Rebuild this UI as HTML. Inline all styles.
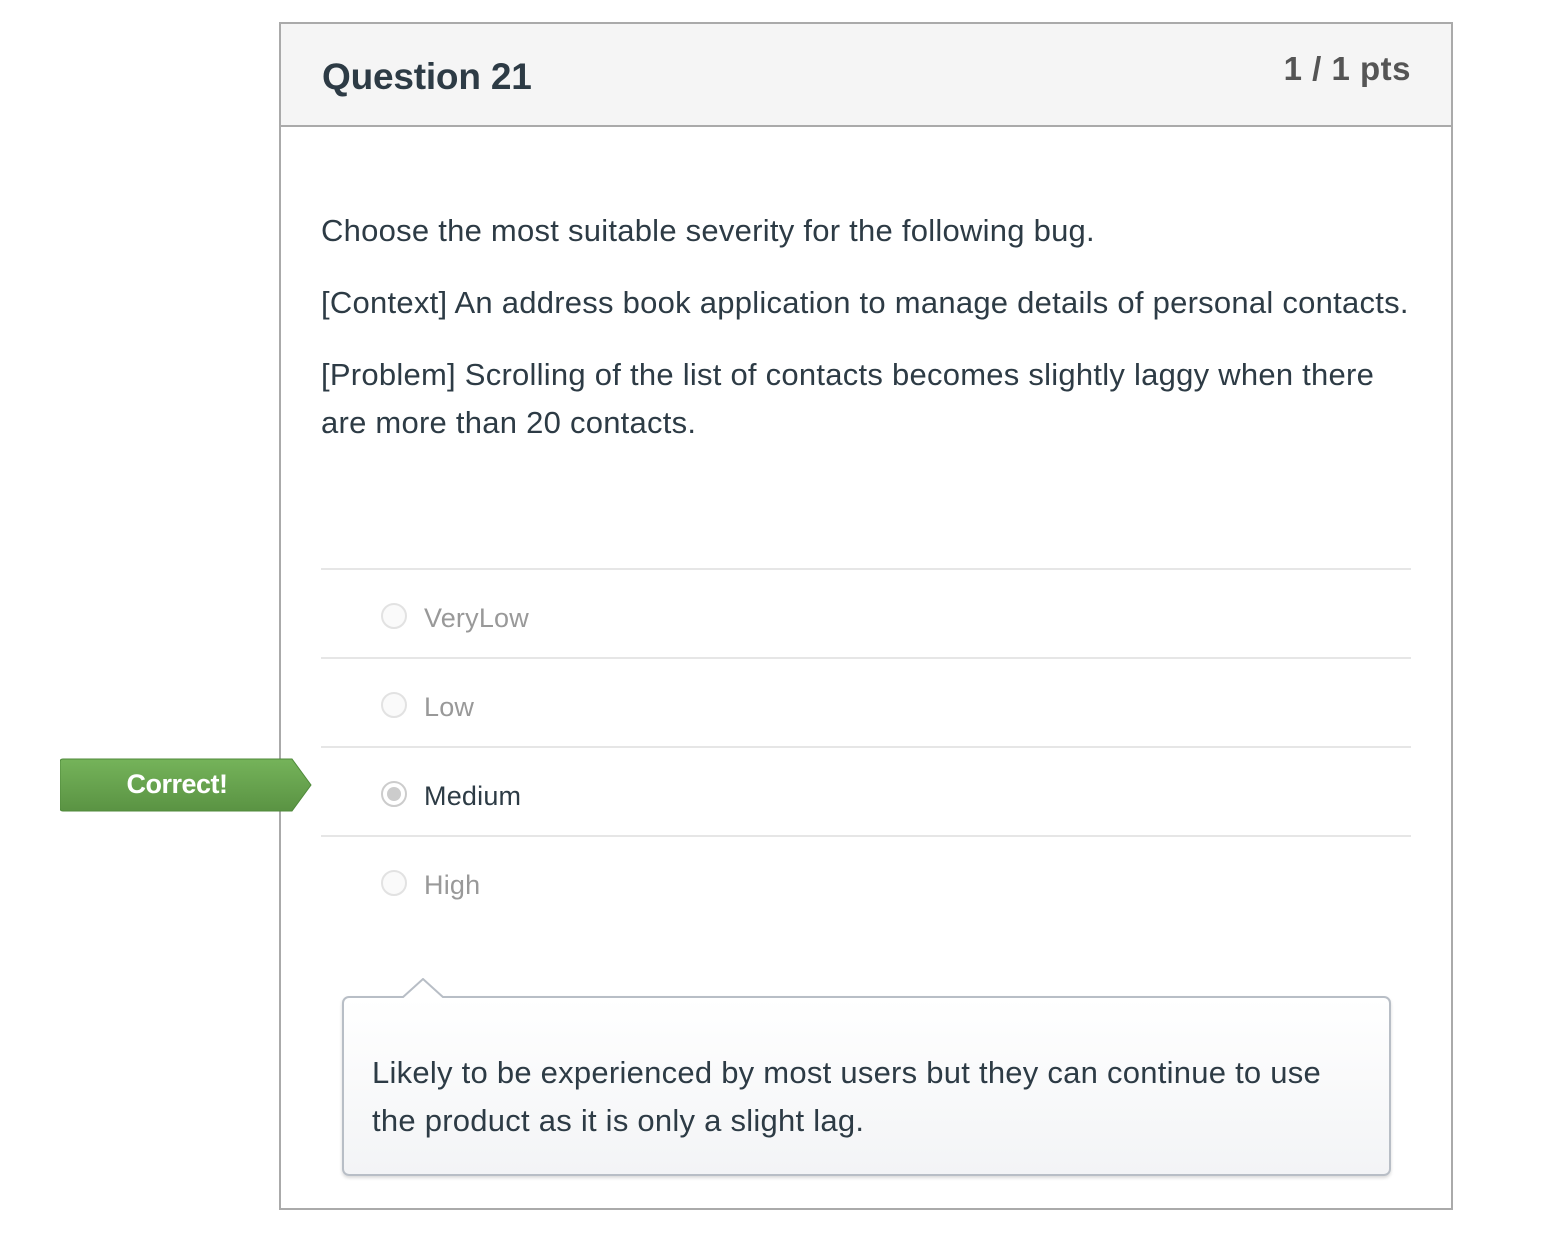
<!DOCTYPE html>
<html><head><meta charset="utf-8"><style>
*{margin:0;padding:0;box-sizing:border-box}
body{width:1557px;height:1258px;background:#fff;font-family:"Liberation Sans",sans-serif;color:#2d3b45;position:relative;overflow:hidden}
.box{position:absolute;left:279px;top:22px;width:1174px;height:1188px;border:2px solid #aaa}
.hdr{position:absolute;left:0;top:0;width:100%;height:103px;background:#f5f5f5;border-bottom:2px solid #aaa}
.q{position:absolute;left:41px;top:32px;font-size:37px;font-weight:bold;color:#2d3b45;letter-spacing:-0.2px}
.pts{position:absolute;right:40px;top:26px;font-size:33px;font-weight:bold;color:#555;letter-spacing:0.5px}
.t{position:absolute;left:321px;font-size:31px;letter-spacing:0.25px;white-space:nowrap}
.sep{position:absolute;left:321px;width:1090px;height:2px;background:#e6e6e6}
.opt{position:absolute;left:424px;font-size:27px;color:#999;letter-spacing:0.2px}
.rad{position:absolute;left:381px;width:26px;height:26px;border:2px solid #e2e2e2;border-radius:50%;background:#fafafa}
.tag{position:absolute;left:60px;top:758px;width:252px;height:54px}
.fb{position:absolute;left:342px;top:996px;width:1049px;height:180px;border:2px solid #b8bec6;border-radius:7px;background:linear-gradient(#fff,#f3f4f6);box-shadow:0 2px 3px rgba(0,0,0,.15)}
</style></head><body>
<div class="box"><div class="hdr"><div class="q">Question 21</div><div class="pts">1 / 1 pts</div></div></div>
<div class="t" style="top:213px">Choose the most suitable severity for the following bug.</div>
<div class="t" style="top:285px">[Context] An address book application to manage details of personal contacts.</div>
<div class="t" style="top:357px">[Problem] Scrolling of the list of contacts becomes slightly laggy when there</div>
<div class="t" style="top:405px">are more than 20 contacts.</div>
<div class="sep" style="top:568px"></div>
<div class="sep" style="top:657px"></div>
<div class="sep" style="top:746px"></div>
<div class="sep" style="top:835px"></div>
<div class="rad" style="top:603px"></div><div class="opt" style="top:603px">VeryLow</div>
<div class="rad" style="top:692px"></div><div class="opt" style="top:692px">Low</div>
<div class="rad" style="top:781px;border-color:#ccc;background:#fff"><div style="position:absolute;left:4px;top:4px;width:14px;height:14px;border-radius:50%;background:#ccc"></div></div>
<div class="opt" style="top:781px;color:#2d3b45">Medium</div>
<div class="rad" style="top:870px"></div><div class="opt" style="top:870px">High</div>
<svg class="tag" viewBox="0 0 252 54"><defs><linearGradient id="g" x1="0" y1="0" x2="0" y2="1"><stop offset="0" stop-color="#75b35a"/><stop offset="1" stop-color="#5a9343"/></linearGradient></defs>
<path d="M3 1H232L251 27L232 53H3Q0 53 0 50V4Q0 1 3 1Z" fill="url(#g)" stroke="#4f8a3b" stroke-width="1"/>
<text x="117" y="35" text-anchor="middle" font-family="Liberation Sans" font-size="27" font-weight="bold" fill="#fff" letter-spacing="-0.5">Correct!</text></svg>
<div class="fb"></div>
<svg style="position:absolute;left:402px;top:978px" width="44" height="22"><path d="M0 20L21 1L42 20" fill="#fff" stroke="#b8bec6" stroke-width="2"/><rect x="0" y="20" width="44" height="2" fill="#fff"/></svg>
<div class="t" style="left:372px;top:1055px">Likely to be experienced by most users but they can continue to use</div>
<div class="t" style="left:372px;top:1103px">the product as it is only a slight lag.</div>
</body></html>
